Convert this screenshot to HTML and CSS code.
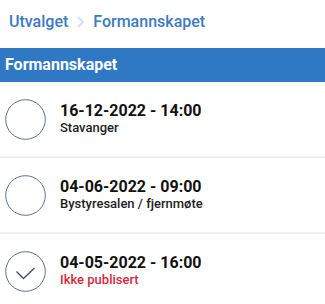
FILE: index.html
```html
<!DOCTYPE html>
<html lang="no">
<head>
<meta charset="utf-8">
<link rel="stylesheet" href="styles.css">
</head>
<body>
<nav class="crumbs">
  <span class="crumb">Utvalget</span>
  <svg class="chev" width="7" height="12" viewBox="0 0 7 12"><path d="M1 1 L6 6 L1 11" fill="none" stroke="#d3e2f3" stroke-width="2"/></svg>
  <span class="crumb">Formannskapet</span>
</nav>
<div class="bar">Formannskapet</div>
<ul class="list">
  <li class="row">
    <svg class="status" width="41" height="41" viewBox="0 0 41 41"><circle cx="20.5" cy="20.5" r="19.8" fill="none" stroke="#5f6f87" stroke-width="1"/></svg>
    <div class="info">
      <div class="title">16-12-2022 - 14:00</div>
      <div class="sub">Stavanger</div>
    </div>
  </li>
  <li class="row">
    <svg class="status" width="41" height="41" viewBox="0 0 41 41"><circle cx="20.5" cy="20.5" r="19.8" fill="none" stroke="#5f6f87" stroke-width="1"/></svg>
    <div class="info">
      <div class="title">04-06-2022 - 09:00</div>
      <div class="sub">Bystyresalen / fjernmøte</div>
    </div>
  </li>
  <li class="row">
    <svg class="status" width="41" height="41" viewBox="0 0 41 41"><circle cx="20.5" cy="20.5" r="19.8" fill="none" stroke="#5f6f87" stroke-width="1"/><path d="M11.5 20.5 L18.5 27.5 L29.5 17" fill="none" stroke="#3f4f6a" stroke-width="1.3"/></svg>
    <div class="info">
      <div class="title">04-05-2022 - 16:00</div>
      <div class="sub warn">Ikke publisert</div>
    </div>
  </li>
</ul>
</body>
</html>
```
FILE: styles.css
```css
html, body {
  margin: 0;
  padding: 0;
  background: #fff;
  font-family: Roboto, "Liberation Sans", sans-serif;
}
.crumbs {
  display: flex;
  align-items: center;
  height: 48px;
  box-sizing: border-box;
  padding: 0 0 4px 9px;
}
.crumb {
  font-size: 16px;
  font-weight: 500;
  color: #3a7bc4;
  line-height: 20px;
}
.chev {
  margin: 0 9px 0 9px;
}
.bar {
  background: #2f78c4;
  color: #fff;
  font-weight: 700;
  font-size: 16px;
  line-height: 34px;
  height: 34px;
  padding-left: 5px;
}
.list {
  list-style: none;
  margin: 0;
  padding: 0;
}
.row {
  display: flex;
  align-items: flex-start;
  padding: 17px 0 16px 5px;
  border-bottom: 2px solid #f0f0f0;
}
.status {
  flex: none;
  display: block;
}
.info {
  margin-left: 14px;
  padding-top: 2px;
}
.title {
  font-size: 16px;
  font-weight: 700;
  line-height: 19px;
  color: #111;
}
.sub {
  font-size: 13px;
  font-weight: 500;
  line-height: 15px;
  color: #1e1e1e;
}
.warn {
  color: #d8283c;
}
```
